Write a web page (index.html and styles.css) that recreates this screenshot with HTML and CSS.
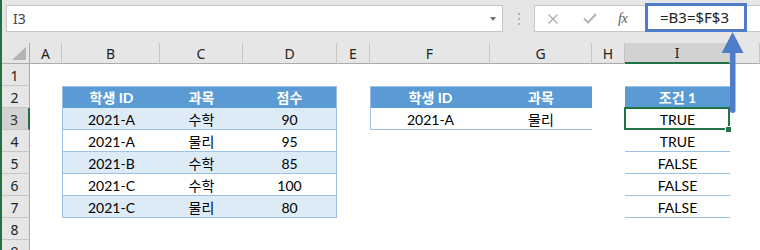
FILE: index.html
```html
<!DOCTYPE html>
<html lang="ko">
<head>
<meta charset="utf-8">
<title>Excel</title>
<link rel="stylesheet" href="styles.css">
</head>
<body>
<div class="app">
  <div class="toolbar">
    <div class="namebox"><span class="nb-text">I3</span><span class="dd"></span></div>
    <div class="grip"><i></i><i></i><i></i></div>
    <div class="fbar">
      <svg class="ic-x" width="10" height="10" viewBox="0 0 10 10"><path d="M0.5 0.5 L9.5 9.5 M9.5 0.5 L0.5 9.5" stroke="#ABABAB" stroke-width="1.3" fill="none"/></svg>
      <svg class="ic-chk" width="14" height="11" viewBox="0 0 14 11"><path d="M1 5.5 L5 9.5 L13 1" stroke="#B4B4B4" stroke-width="2" fill="none"/></svg>
      <span class="fx">fx</span>
      <div class="formula">=B3=$F$3</div>
    </div>
  </div>
  <div class="sheet">
    <div class="ch corner"><span class="tri"></span></div>
    <div class="ch">A</div><div class="ch">B</div><div class="ch">C</div><div class="ch">D</div><div class="ch">E</div><div class="ch">F</div><div class="ch">G</div><div class="ch">H</div><div class="ch sel">I</div><div class="ch"></div>

    <div class="rh">1</div><div></div><div></div><div></div><div></div><div></div><div></div><div></div><div></div><div></div><div></div>

    <div class="rh">2</div><div></div>
    <div class="th bl">학생 ID</div><div class="th">과목</div><div class="th br">점수</div>
    <div></div>
    <div class="th bl">학생 ID</div><div class="th">과목</div>
    <div></div>
    <div class="th">조건 1</div>
    <div></div>

    <div class="rh sel">3</div><div></div>
    <div class="td alt bl bb">2021-A</div><div class="td alt bb">수학</div><div class="td alt br bb">90</div>
    <div></div>
    <div class="td bl bb">2021-A</div><div class="td bb">물리</div>
    <div></div>
    <div class="td bb active">TRUE</div>
    <div></div>

    <div class="rh">4</div><div></div>
    <div class="td bl bb">2021-A</div><div class="td bb">물리</div><div class="td br bb">95</div>
    <div></div><div></div><div></div><div></div>
    <div class="td bb">TRUE</div>
    <div></div>

    <div class="rh">5</div><div></div>
    <div class="td alt bl bb">2021-B</div><div class="td alt bb">수학</div><div class="td alt br bb">85</div>
    <div></div><div></div><div></div><div></div>
    <div class="td bb">FALSE</div>
    <div></div>

    <div class="rh">6</div><div></div>
    <div class="td bl bb">2021-C</div><div class="td bb">수학</div><div class="td br bb">100</div>
    <div></div><div></div><div></div><div></div>
    <div class="td bb">FALSE</div>
    <div></div>

    <div class="rh">7</div><div></div>
    <div class="td alt bl bb">2021-C</div><div class="td alt bb">물리</div><div class="td alt br bb">80</div>
    <div></div><div></div><div></div><div></div>
    <div class="td bb">FALSE</div>
    <div></div>

    <div class="rh">8</div><div></div><div></div><div></div><div></div><div></div><div></div><div></div><div></div><div></div><div></div>

    <div class="rh">9</div><div></div><div></div><div></div><div></div><div></div><div></div><div></div><div></div><div></div><div></div>
  </div>
  <svg class="arrow" width="26" height="84" viewBox="0 0 26 84">
    <rect x="10" y="18" width="5.5" height="64" rx="2.7" fill="#4E7CC9"/>
    <polygon points="12.6,1 23.5,22 1.7,22" fill="#4E7CC9"/>
  </svg>
</div>
</body>
</html>
```
FILE: styles.css
```css
html, body {
  margin: 0;
  padding: 0;
  background: #fff;
}

.app {
  position: relative;
  width: 760px;
  height: 250px;
  overflow: hidden;
  background: #fff;
  font-family: "Lato", "Noto Sans CJK KR", sans-serif;
}

.app::before {
  content: "";
  position: absolute;
  left: 0;
  top: 0;
  bottom: 0;
  width: 2px;
  background: #217346;
  z-index: 5;
}

/* toolbar */
.toolbar {
  height: 43px;
  box-sizing: border-box;
  padding-top: 5px;
  background: #E6E6E6;
  display: flex;
  align-items: flex-start;
}

.namebox {
  margin-left: 6px;
  width: 497px;
  height: 27px;
  box-sizing: border-box;
  border: 1px solid #C6C6C6;
  background: #fff;
  display: flex;
  align-items: center;
  justify-content: space-between;
  padding: 0 6px 0 6px;
}

.nb-text {
  font-family: "Noto Sans", sans-serif;
  font-size: 14px;
  color: #444;
}

.dd {
  width: 0;
  height: 0;
  border-left: 3.5px solid transparent;
  border-right: 3.5px solid transparent;
  border-top: 4px solid #707070;
  margin-top: 1px;
}

.grip {
  margin-left: 15px;
  margin-top: 8px;
  width: 2px;
  display: flex;
  flex-direction: column;
  gap: 3px;
}

.grip i {
  display: block;
  width: 2px;
  height: 2px;
  background: #B3B3B3;
}

.fbar {
  margin-left: 14px;
  flex: 1;
  height: 27px;
  box-sizing: border-box;
  border: 1px solid #C6C6C6;
  border-right: none;
  background: #fff;
  display: flex;
  align-items: center;
  padding-left: 13px;
}

.ic-x {
  display: block;
}

.ic-chk {
  display: block;
  margin-left: 25px;
}

.fx {
  display: inline-block;
  width: 14px;
  margin-left: 21px;
  font-family: "Liberation Serif", serif;
  font-style: italic;
  font-size: 14px;
  color: #5A5A5A;
  letter-spacing: -0.5px;
}

.formula {
  align-self: flex-start;
  margin-top: -3px;
  margin-left: 13px;
  width: 102px;
  height: 29px;
  box-sizing: border-box;
  border: 3px solid #4E7CC9;
  padding-left: 12px;
  font-family: "Noto Sans", sans-serif;
  font-size: 15px;
  line-height: 22px;
  color: #222;
  background: #fff;
  position: relative;
  z-index: 2;
}

/* sheet */
.sheet {
  display: grid;
  grid-template-columns: 30px 32px 98px 83px 94px 33px 120px 102px 33px 105px 1fr;
  grid-template-rows: 21px repeat(9, 22px);
}

.sheet > div {
  box-sizing: border-box;
  display: flex;
  align-items: center;
  justify-content: center;
  white-space: nowrap;
  font-size: 14px;
  line-height: 1;
  color: #000;
}

.ch {
  background: #E6E6E6;
  border-right: 1px solid #C6C6C6;
  border-bottom: 1px solid #ABABAB;
  font-family: "Noto Sans", sans-serif;
  font-size: 14px !important;
  color: #222 !important;
  padding-top: 1px;
}

.ch.sel {
  background: #D2D2D2;
  border-bottom: 2px solid #217346;
}

.corner {
  position: relative;
  border-right: 1px solid #ABABAB;
}

.tri {
  position: absolute;
  right: 3px;
  bottom: 3px;
  width: 0;
  height: 0;
  border-left: 14px solid transparent;
  border-bottom: 13px solid #B4B4B4;
}

.rh {
  background: #E6E6E6;
  border-right: 1px solid #ABABAB;
  border-bottom: 1px solid #C6C6C6;
  font-family: "Noto Sans", sans-serif;
  color: #222 !important;
  padding-top: 2px;
}

.rh.sel {
  background: #D2D2D2;
  border-right: 2px solid #217346;
  color: #333 !important;
}

.th {
  background: #5B9BD5;
  color: #fff !important;
  font-weight: bold;
  border-top: 1px solid #9BC2E6;
  padding-top: 1px;
}

.td {
  padding-top: 2px;
}

.alt {
  background: #DDEBF7;
}

.bl {
  border-left: 1px solid #9BC2E6;
}

.br {
  border-right: 1px solid #9BC2E6;
}

.bb {
  border-bottom: 1px solid #9BC2E6;
}

.active {
  position: relative;
}

.active::after {
  content: "";
  position: absolute;
  left: -1px;
  top: -1px;
  right: 0;
  bottom: -1px;
  border: 2px solid #217346;
}

.active::before {
  content: "";
  position: absolute;
  right: -2px;
  bottom: -4px;
  width: 5px;
  height: 5px;
  background: #217346;
  border: 1px solid #fff;
  z-index: 1;
}

.arrow {
  position: absolute;
  left: 720px;
  top: 31px;
  z-index: 4;
}
```
